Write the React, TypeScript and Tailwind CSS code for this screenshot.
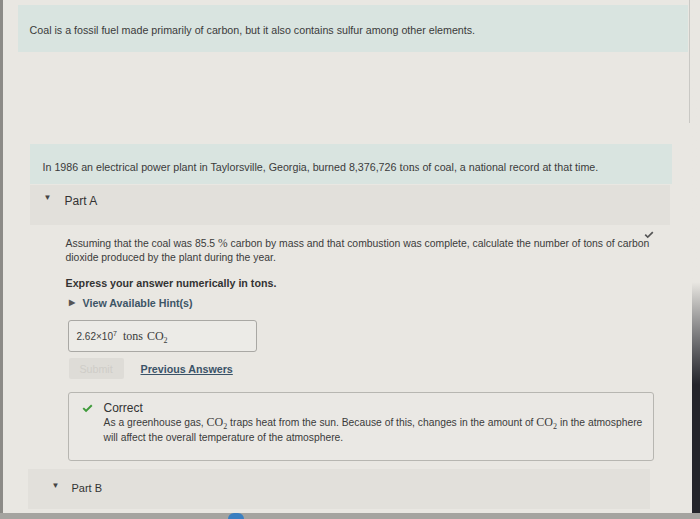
import React from 'react';

const Check = ({ className }: { className?: string }) => (
  <svg viewBox="0 0 12 10" className={className} fill="currentColor">
    <path d="M0.5 5.4 L2 3.9 L4.4 6.2 L10 0.6 L11.5 2.1 L4.4 9.2 Z" />
  </svg>
);

const Co2 = () => (
  <span className="font-['Liberation_Serif',serif] text-[12px]">
    CO<span className="relative top-[3px] text-[8px]">2</span>
  </span>
);

export default function App() {
  return (
    <div className="w-[700px] h-[519px] overflow-hidden bg-[#e9e7e2] flex flex-col font-['Liberation_Sans',Arial,sans-serif] text-[#3b3b3b] text-[10.7px]">
      <div className="flex flex-1 min-h-0">
        {/* left bezel */}
        <div className="w-[3px] bg-[#8c8b87]" />

        <div className="flex-1 flex flex-col">
          {/* intro panel */}
          <div className="h-[123px] w-[687px] border-r border-[#c9c8c4] pt-[5px] pl-[15px]">
            <div className="h-[47px] w-[670px] bg-[#d9e4e0] pl-[12px] pt-[17px]">
              Coal is a fossil fuel made primarily of carbon, but it also contains sulfur among other elements.
            </div>
          </div>

          {/* problem statement */}
          <div className="mt-[21px] ml-[27px] w-[642px] h-[40px] bg-[#d9e4e0] pl-[13px] pt-[14px]">
            In 1986 an electrical power plant in Taylorsville, Georgia, burned 8,376,726{' '}
            <span className="font-['Liberation_Serif',serif] text-[12px]">tons</span> of coal, a national record at that time.
          </div>

          {/* Part A header */}
          <div className="mt-[1px] ml-[27px] w-[640px] h-[40px] bg-[#e2e0db] flex items-start pt-[7px]">
            <span className="ml-[14px] text-[8px] text-[#444]">▼</span>
            <span className="ml-[13px] text-[12px] text-[#333]">Part A</span>
          </div>

          {/* Part A body */}
          <div className="pl-[63px] pr-[30px] pt-[3px] relative">
            <Check className="absolute left-[641px] top-[6px] w-[10px] h-[8px] text-[#555]" />
            <p className="mt-[8px] leading-[14px] w-[596px] text-[10.4px]">
              Assuming that the coal was 85.5 <span className="font-['Liberation_Serif',serif] text-[11.5px]">%</span> carbon by mass and that combustion was complete, calculate the number of tons of carbon dioxide produced by the plant during the year.
            </p>
            <p className="mt-[10px] font-bold text-[#333]">Express your answer numerically in tons.</p>
            <div className="mt-[4px] flex items-center font-bold text-[#3d5566]">
              <span className="text-[8px] ml-[3px] text-[#555]">▶</span>
              <span className="ml-[8px]">View Available Hint(s)</span>
            </div>
            <div className="mt-[9px] w-[189px] h-[32px] border border-[#a9a8a4] rounded-[3px] bg-[#ecebe7] flex items-center pl-[8px] ml-[2px]">
              <span className="text-[10px]">
                2.62×10<span className="relative -top-[4px] text-[7px]">7</span>
              </span>
              <span className="ml-[6px] font-['Liberation_Serif',serif] text-[12px]">tons</span>
              <span className="ml-[4px]">
                <Co2 />
              </span>
            </div>
            <div className="mt-[6px] flex items-center ml-[3px]">
              <div className="w-[55px] h-[21px] bg-[#dedcd7] rounded-[2px] flex items-center justify-center text-[#cfcdc8]">
                Submit
              </div>
              <span className="ml-[17px] font-bold text-[#3b5368] underline">Previous Answers</span>
            </div>
            <div className="mt-[13px] ml-[2px] w-[586px] h-[69px] border border-[#b7b6b1] rounded-[3px] bg-[#eae8e4] flex pl-[13px] pt-[8px]">
              <Check className="shrink-0 w-[11px] h-[9px] mt-[3px] text-[#3f9a3a]" />
              <div className="ml-[11px] leading-[14px]">
                <div className="text-[12px] text-[#333]">Correct</div>
                <div className="w-[548px] text-[10.3px] leading-[14px]">
                  As a greenhouse gas, <Co2 /> traps heat from the sun. Because of this, changes in the amount of <Co2 /> in the atmosphere will affect the overall temperature of the atmosphere.
                </div>
              </div>
            </div>
          </div>

          {/* Part B header */}
          <div className="mt-[8px] ml-[25px] w-[622px] h-[40px] bg-[#e2e0db] flex items-start pt-[11px]">
            <span className="ml-[24px] text-[8px] text-[#444]">▼</span>
            <span className="ml-[12px] text-[11px] text-[#333]">Part B</span>
          </div>
        </div>

        {/* right bezel */}
        <div className="w-[10px] bg-gradient-to-b from-[#e9e7e2] from-55% to-[#24252b] to-75%" />
      </div>

      {/* bottom edge */}
      <div className="h-[6px] bg-[#a5a4a0] flex">
        <div className="ml-[228px] w-[16px] h-[6px] rounded-t-full bg-[#3a7fc1]" />
      </div>
    </div>
  );
}
